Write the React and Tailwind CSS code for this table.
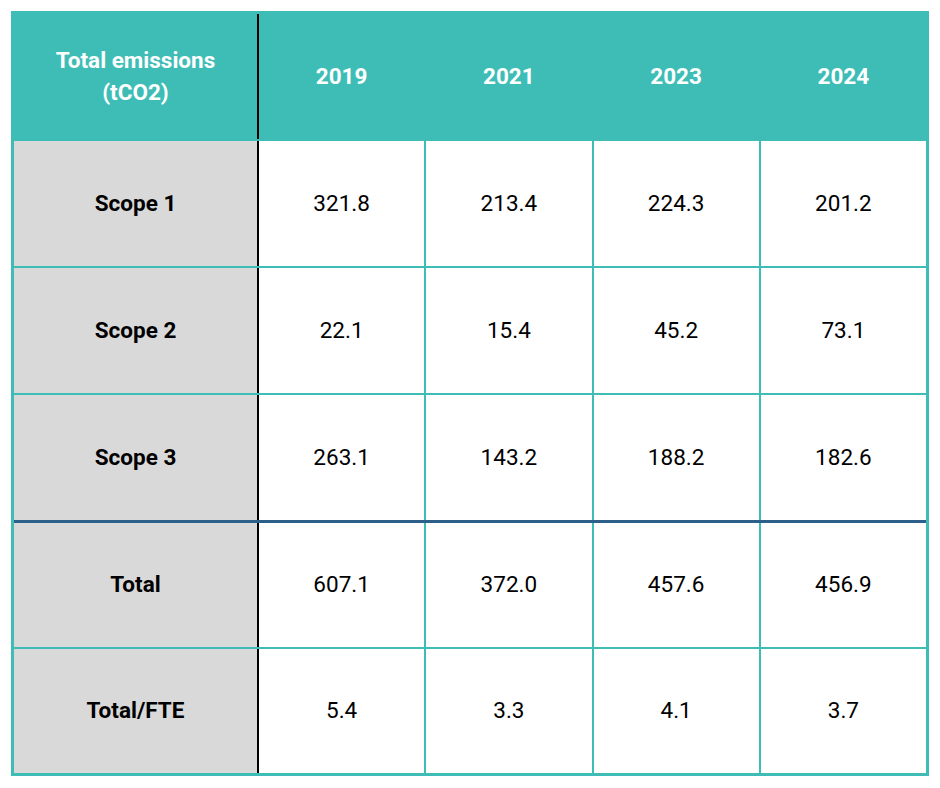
import React from "react";

const rows = [
  { label: "Scope 1", vals: ["321.8", "213.4", "224.3", "201.2"] },
  { label: "Scope 2", vals: ["22.1", "15.4", "45.2", "73.1"] },
  { label: "Scope 3", vals: ["263.1", "143.2", "188.2", "182.6"] },
  { label: "Total", vals: ["607.1", "372.0", "457.6", "456.9"], blue: true },
  { label: "Total/FTE", vals: ["5.4", "3.3", "4.1", "3.7"], last: true },
];

export default function App() {
  return (
    <div className="w-[940px] h-[788px] bg-white pt-[11px] pl-[11px]" style={{ fontFamily: "Roboto, 'Liberation Sans', sans-serif" }}>
      <div className="w-[918px] h-[765px] border-[3px] border-[#3dbdb6] flex flex-col">
        <div className="flex h-[125px] bg-[#3dbdb6] text-white font-bold text-[22.5px]">
          <div className="w-[245px] border-r-[2px] border-black flex items-center justify-center text-center leading-[32px] pb-[2px]">
            Total emissions
            <br />
            (tCO2)
          </div>
          {["2019", "2021", "2023", "2024"].map((y, i) => (
            <div key={y} className={`flex-1 flex items-center justify-center ${i > 0 ? "border-l-[2px] border-[#3dbdb6]" : ""}`}>
              {y}
            </div>
          ))}
        </div>
        {rows.map((r) => (
          <div
            key={r.label}
            className={`flex ${r.last ? "h-[126px]" : "h-[127px]"} ${r.blue ? "border-t-[3px] border-[#2c5f8a]" : "border-t-[2px] border-[#3dbdb6]"} text-[22.5px] text-black`}
          >
            <div className="w-[245px] bg-[#d9d9d9] border-r-[2px] border-black flex items-center justify-center font-bold">
              {r.label}
            </div>
            {r.vals.map((v, i) => (
              <div key={i} className={`flex-1 flex items-center justify-center ${i > 0 ? "border-l-[2px] border-[#3dbdb6]" : ""}`}>
                {v}
              </div>
            ))}
          </div>
        ))}
      </div>
    </div>
  );
}
